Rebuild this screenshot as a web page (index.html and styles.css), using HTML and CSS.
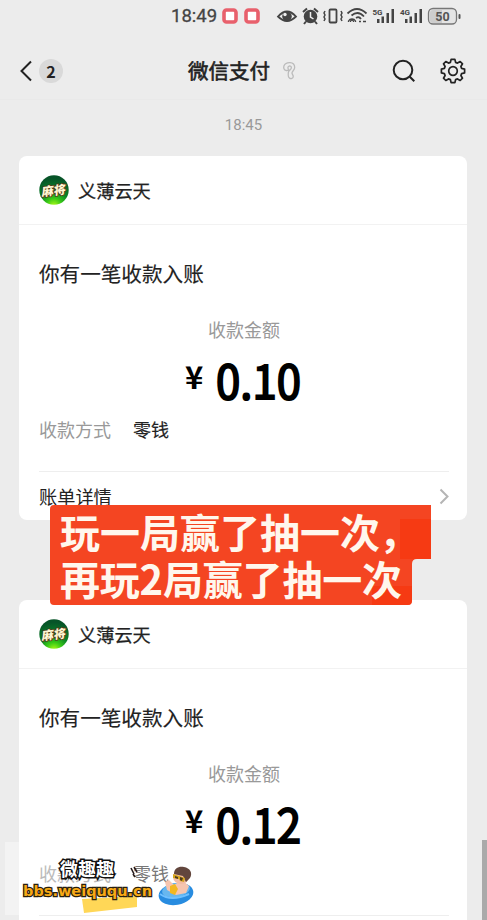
FILE: index.html
```html
<!DOCTYPE html>
<html lang="zh-CN">
<head>
<meta charset="utf-8">
<title>微信支付</title>
<link rel="stylesheet" href="styles.css">
</head>
<body>
<svg width="0" height="0" class="defs">
  <defs>
    <radialGradient id="green" cx="50%" cy="105%" r="95%"><stop offset="0" stop-color="#b6ff19"/><stop offset=".28" stop-color="#38c916"/><stop offset=".55" stop-color="#0a8426"/><stop offset="1" stop-color="#075428"/></radialGradient>
    <symbol id="avatar" viewBox="0 0 30 30"><circle cx="15" cy="15" r="14.7" fill="url(#green)"/><g transform="rotate(-6 15 15) skewX(-10) translate(3 1)"><text x="2.5" y="19" textLength="24" lengthAdjust="spacingAndGlyphs" class="avatar-text">麻将</text></g></symbol>
  </defs>
</svg>
<main class="screen">
  <header class="status">
    <span class="clock">18:49</span>
    <svg class="status-icons" width="243" height="30" viewBox="218 0 243 30">
      <g fill="#fff" stroke="#e8606c" stroke-width="3.6"><rect x="224" y="9" width="12" height="12" rx="2.5"/><rect x="246" y="9" width="12" height="12" rx="2.5"/></g>
      <path d="M278 15.500Q287 5.500 296 15.500Q287 24.500 278 15.500Z" fill="none" stroke="#444" stroke-width="1.800"/><circle cx="287" cy="15.500" r="4.800" fill="#444"/><circle cx="285" cy="13.500" r="1.700" fill="#eee"/>
      <circle cx="310.500" cy="15.500" r="6.800" fill="#444"/><path d="M303 11l4-3.500M318 11l-4-3.500M306 20.500l-2 2.500M315 20.500l2 2.500" stroke="#444" stroke-width="2"/><path d="M310.500 11v5l3 2" fill="none" stroke="#eee" stroke-width="1.500"/>
      <rect x="329.500" y="8.500" width="7" height="13" rx="1" fill="none" stroke="#444" stroke-width="1.800"/><path d="M325 10l-1 2 1 2-1 2 1 2-1 2M341 10l1 2-1 2 1 2-1 2 1 2" fill="none" stroke="#444" stroke-width="1.500"/>
      <g fill="none" stroke="#444" stroke-width="1.800"><path d="M347.500 12.500Q357 3.500 366.500 12.500M351.500 14.500Q358 9 364 15.500M356 17Q359 15 361 18"/><path stroke-width="1.300" d="M348.500 21v-1a4 4 0 0 1 7 0v1M350.500 21v-1a1.800 1.800 0 0 1 3 0v1M359 20.500h2M363 20.500h3"/></g>
      <g fill="#444"><rect x="377" y="18" width="2.500" height="4"/><rect x="381.500" y="15.500" width="2.500" height="6.500"/><rect x="386.500" y="12" width="2.500" height="10"/><rect x="391.500" y="8" width="2.500" height="14"/><rect x="405" y="18" width="2.500" height="4"/><rect x="409.500" y="15.500" width="2.500" height="6.500"/><rect x="414.500" y="12" width="2.500" height="10"/><rect x="419.500" y="8" width="2.500" height="14"/></g>
      <text x="372.500" y="14" class="network">5G</text><text x="400" y="14" class="network">4G</text>
      <rect x="428.500" y="7.500" width="28" height="15.500" rx="4.500" fill="#e4e4e4" stroke="#777" stroke-width="1.300"/><path d="M430 12q0-3 3-3h9v13h-9q-3 0-3-3z" fill="#cdcdcd"/><rect x="458.500" y="13" width="2" height="5" rx="1" fill="#555"/><text x="442.500" y="20" class="battery">50</text>
    </svg>
  </header>
  <nav class="nav">
    <svg class="back" width="14" height="24" viewBox="0 0 14 24"><path d="M12 2.500L2.500 12l9.500 9.500"/></svg>
    <span class="badge">2</span>
    <h1 class="title">微信支付</h1>
    <svg class="ear" width="16" height="20" viewBox="0 0 16 20"><path d="M4.300 9.500C1.800 9 1.300 6.800 2 4.800 3 2.300 5.500 1.500 8 1.600c3 .1 4.700 2.200 4.700 4.900 0 2.800-2.700 3.500-2.700 5.500 0 1.500 1.500 2 1.200 3.800-.3 1.600-2.200 2.200-3.600 1.300-1.700-1-1.500-4-1.200-6 .3-2.200 3-2.300 3-4.300 0-1.400-1.200-2-2.300-1.700-1.500.4-1.300 2-.8 3 .3 1-.8 1.700-2 1.400z"/></svg>
    <svg class="search" width="26" height="26" viewBox="0 0 26 26"><circle cx="12" cy="12" r="9.300"/><path d="M18.800 18.800l4.500 4.500"/></svg>
    <svg class="gear" width="26" height="26" viewBox="-13 -13 26 26"><path d="M-1.900-11.600H1.900L2.600-8.600 4.500-7.900 7.200-9.500 9.500-7.200 7.900-4.500 8.600-2.600 11.600-1.900V1.900L8.600 2.600 7.900 4.500 9.500 7.200 7.200 9.500 4.500 7.900 2.600 8.600 1.900 11.600H-1.900L-2.600 8.600-4.500 7.900-7.200 9.500-9.500 7.200-7.900 4.500-8.600 2.600-11.600 1.900V-1.900L-8.600-2.600-7.900-4.500-9.500-7.200-7.200-9.500-4.500-7.900-2.600-8.600Z"/><circle r="4.300"/></svg>
  </nav>
  <time class="time">18:45</time>
  <section class="card">
    <div class="merchant"><svg width="30" height="30"><use href="#avatar"/></svg><span>义薄云天</span></div>
    <div class="details">
      <h2>你有一笔收款入账</h2>
      <p class="label">收款金额</p>
      <p class="amount"><span class="yen">¥</span><span class="number">0.10</span></p>
      <p class="method"><span>收款方式</span><b>零钱</b></p>
      <div class="bill"><span>账单详情</span><svg width="10" height="17" viewBox="0 0 10 17"><path d="M1.500 1.500l7 7-7 7"/></svg></div>
    </div>
  </section>
  <section class="card">
    <div class="merchant"><svg width="30" height="30"><use href="#avatar"/></svg><span>义薄云天</span></div>
    <div class="details">
      <h2>你有一笔收款入账</h2>
      <p class="label">收款金额</p>
      <p class="amount"><span class="yen">¥</span><span class="number">0.12</span></p>
      <p class="method faded"><span>收款方式</span><b>零钱</b></p>
      <div class="bill"></div>
    </div>
  </section>
  <svg class="caption" width="382" height="102" viewBox="0 0 382 102">
    <path d="M4 0H381V54H367Q362 54 362 59V96Q362 100 358 100H4Q0 100 0 96V4Q0 0 4 0Z" fill="#f44522"/>
    <path d="M350 14h31v40h-31zM322 81h40v14q0 5-4 5h-36z" fill="#f8340c" opacity=".65"/>
    <text x="10" y="42.500" class="caption-text">玩一局赢了抽一次<tspan dx="-1">，</tspan></text>
    <text x="10" y="89.500" textLength="342" class="caption-text">再玩2局赢了抽一次</text>
  </svg>
  <div class="haze"></div>
  <svg class="watermark" width="200" height="65" viewBox="0 0 200 65">
    <path d="M82 44l55-3v11l-53 6z" fill="#ffd757"/>
    <text x="60" y="21" textLength="54" class="site-name">微趣趣</text>
    <text x="23" y="41" textLength="129" class="site-url">bbs.weiququ.cn</text>
    <path d="M131 13l3 6m0-7l3 5m-4 2l2 3" stroke="#281b1d" stroke-width="1.600"/>
    <ellipse cx="176" cy="39" rx="17.500" ry="11" transform="rotate(-10 176 39)" fill="#288ce0"/><ellipse cx="176" cy="35" rx="14" ry="7" transform="rotate(-10 176 35)" fill="#67b7ef"/>
    <path d="M165 27l4-2 5 5 8-5 7 6-3 7-10 2-9-5z" fill="#f7c5af"/><path d="M170 31l5-2 3 5-3 6-5-2z" fill="#f3b822"/>
    <ellipse cx="181" cy="22" rx="8" ry="7" fill="#f3bda5"/><path d="M174 19c0-6 5-8 10-7 6 1 9 6 6 11l-4 4-3-6z" fill="#62463d"/><path d="M173 19l12 4-1 4-4-1-1-2-6-1z" fill="#d6a61b"/><path d="M175 21l3 1v2l-3-1zm5 1l3 1-1 3-2-1z" fill="#4d3b20"/>
    <path d="M160 39q11 8 29 0" fill="none" stroke="#6fc0ff" stroke-width="2"/>
  </svg>
  <div class="scrollbar"></div>
</main>
</body>
</html>
```
FILE: styles.css
```css
* { box-sizing: border-box; }
body { margin: 0; background: #ececec; }
h1, h2, p { margin: 0; }
svg { display: block; flex: none; }
.defs { position: absolute; }
.screen { position: relative; width: 487px; height: 920px; overflow: hidden; background: #ececec; color: #222; font-family: "Noto Sans CJK SC", sans-serif; }
.status { height: 31px; display: flex; align-items: center; padding-left: 171px; }
.clock { width: 47px; color: #444; font: 400 18.500px/30px Roboto, sans-serif; -webkit-text-stroke: .3px #444; }
.network { font: 700 8px Roboto, sans-serif; fill: #444; }
.battery { font: 700 12.500px Roboto, sans-serif; fill: #555; text-anchor: middle; }
.nav { height: 69px; display: flex; align-items: center; padding: 11px 0 0 19px; border-bottom: 1px solid #e9e9e9; }
.nav svg { fill: none; stroke: #222; stroke-width: 2; }
.badge { width: 24px; height: 24px; margin-left: 6px; border-radius: 50%; background: #d9d9d9; font: 700 16px/24px "Noto Sans CJK SC", sans-serif; text-align: center; }
.title { position: relative; top: -1px; margin-left: 125px; width: 84px; white-space: nowrap; font-size: 20.500px; line-height: 30px; font-weight: 400; -webkit-text-stroke: .6px #222; }
.nav .ear { margin-left: 10px; stroke: #bbb; stroke-width: 1.300; }
.nav .search { margin-left: 93px; }
.nav .gear { margin-left: 23px; stroke-width: 1.700; stroke-linejoin: round; }
.time { display: block; height: 56px; padding-top: 14px; text-align: center; font: 400 15px/22px Roboto, sans-serif; color: #999; }
.card { width: 448px; height: 364px; margin: 0 0 80px 19px; background: #fff; border-radius: 8px; }
.merchant { height: 69px; display: flex; align-items: center; gap: 9px; padding-left: 20px; border-bottom: 1px solid #f2f2f2; font-size: 18.200px; line-height: 28px; -webkit-text-stroke: .25px #222; }
.avatar-text { font: 900 12px "Noto Sans CJK SC", sans-serif; fill: #fff6d2; stroke: #50391a; stroke-width: 1.500px; paint-order: stroke; }
.details { padding: 32px 18px 0 20px; }
h2 { font-size: 20.600px; line-height: 32px; font-weight: 400; -webkit-text-stroke: .15px #222; }
.label { margin-top: 27px; text-align: center; font-size: 18px; line-height: 26px; color: #999; }
.amount { height: 75px; display: flex; padding-left: 146px; color: #000; }
.yen { width: 31px; font: 700 31px/68px "Noto Sans CJK SC", sans-serif; }
.number { font: 400 47px/73px "Noto Sans CJK SC", sans-serif; transform: scaleX(.93); transform-origin: 0 50%; -webkit-text-stroke: 2px #000; }
.method { display: flex; gap: 22px; font-size: 18px; line-height: 24px; color: #999; }
.method b { color: #222; font-weight: 400; -webkit-text-stroke: .2px #222; }
.bill { margin-top: 30px; padding-top: 11px; border-top: 1px solid #eee; display: flex; justify-content: space-between; align-items: center; font-size: 18.200px; line-height: 26px; }
.bill svg { fill: none; stroke: #b5b5b5; stroke-width: 2; }
.faded { color: #bbb; }
.faded b { color: #777; -webkit-text-stroke: 0; }
.caption { position: absolute; left: 50px; top: 505px; }
.caption-text { font: 700 40px "Noto Sans CJK SC", sans-serif; fill: #fff7ed; }
.haze { position: absolute; left: 5px; top: 842px; width: 14px; height: 73px; background: #f3f3f3; }
.watermark { position: absolute; left: 0; top: 855px; }
.site-name { font: 700 18px "Noto Sans CJK SC", sans-serif; fill: #fff; stroke: #111; stroke-width: 3px; paint-order: stroke; }
.site-url { font: 700 14.500px "DejaVu Sans", sans-serif; fill: #f7a916; stroke: #28200f; stroke-width: 2.500px; paint-order: stroke; }
.scrollbar { position: absolute; right: 0; top: 840px; width: 5px; height: 80px; background: #aaa; }
```
